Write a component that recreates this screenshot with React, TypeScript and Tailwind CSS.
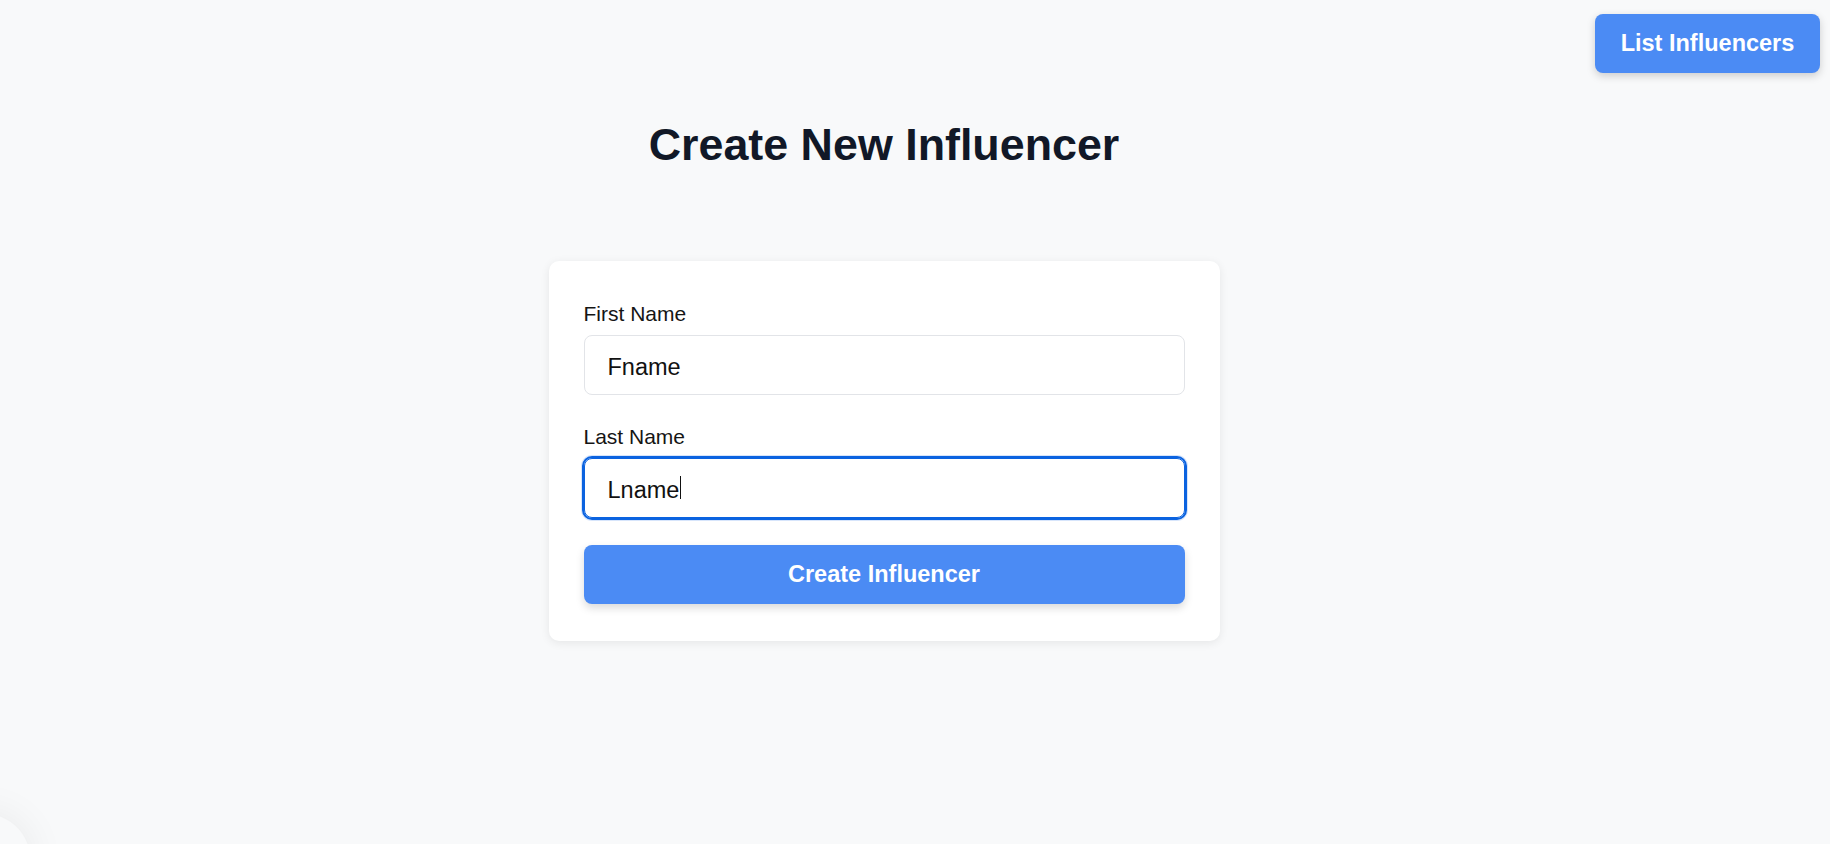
import React from 'react';

const App = () => {
  return (
    <div className="relative min-h-screen overflow-hidden bg-[#f8f9fa] font-['Liberation_Sans',Arial,sans-serif]">
      {/* top-right action */}
      <div className="flex justify-end pt-[14px] pr-[10px]">
        <button
          type="button"
          className="h-[59px] w-[225px] rounded-lg bg-[#4b8bf4] text-[23.5px] font-bold text-white shadow-[0_3px_8px_rgba(0,0,0,0.18)]"
        >
          List Influencers
        </button>
      </div>

      <div className="flex flex-col items-center pr-[62px]">
        <h1 className="mt-[44px] text-[44.8px] leading-[54px] font-bold text-[#111827]">
          Create New Influencer
        </h1>

        <form
          className="mt-[90px] w-[671px] rounded-[10px] bg-white px-[35px] pt-[41px] pb-[37px] shadow-[0_2px_10px_rgba(0,0,0,0.08)]"
          onSubmit={(e) => e.preventDefault()}
        >
          <label className="block text-[21px] leading-[24px] text-[#151515]">First Name</label>
          <input
            className="mt-[9px] block h-[60px] w-full rounded-lg border border-[#e2e4e8] bg-white pt-[4px] pl-[23px] text-[23.5px] text-[#111] outline-none"
            defaultValue="Fname"
          />

          <label className="mt-[30px] block text-[21px] leading-[24px] text-[#151515]">Last Name</label>
          <div className="relative mt-[9px]">
            <input
              readOnly
              className="block h-[60px] w-full rounded-lg border border-[#0b63e0] bg-white pt-[4px] pl-[23px] text-[23.5px] text-[#111] caret-transparent outline-2 outline-solid outline-[#0b63e0] shadow-[0_0_0_3px_rgba(96,150,240,0.25)]"
              value="Lname"
            />
            <span className="absolute left-[96px] top-[18px] h-[23px] w-px bg-[#111]" />
          </div>

          <button
            type="submit"
            className="mt-[27px] block h-[59px] w-full rounded-lg bg-[#4b8bf4] text-[23.5px] font-bold text-white shadow-[0_4px_8px_rgba(0,0,0,0.15)]"
          >
            Create Influencer
          </button>
        </form>
      </div>

      {/* faint shadow of a widget sitting off the bottom-left edge */}
      <div className="absolute -bottom-[60px] -left-[60px] h-[90px] w-[90px] rounded-full bg-[#f8f9fa] shadow-[0_0_40px_rgba(0,0,0,0.07)]" />
    </div>
  );
};

export default App;
